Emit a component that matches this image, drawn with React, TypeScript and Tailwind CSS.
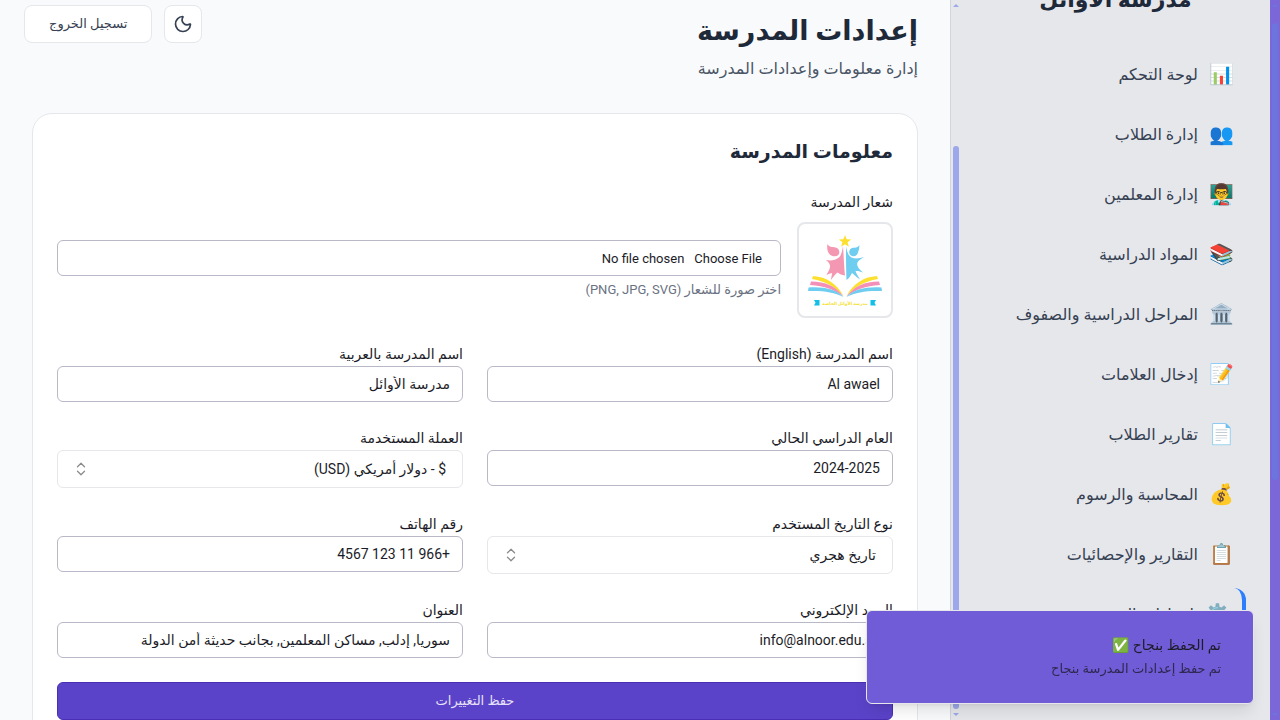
import { useId, type ReactNode } from "react";

const navItems = [
  { icon: "📊", label: "لوحة التحكم" },
  { icon: "👥", label: "إدارة الطلاب" },
  { icon: "👨‍🏫", label: "إدارة المعلمين" },
  { icon: "📚", label: "المواد الدراسية" },
  { icon: "🏛️", label: "المراحل الدراسية والصفوف" },
  { icon: "📝", label: "إدخال العلامات" },
  { icon: "📄", label: "تقارير الطلاب" },
  { icon: "💰", label: "المحاسبة والرسوم" },
  { icon: "📋", label: "التقارير والإحصائيات" },
  { icon: "⚙️", label: "إعدادات المدرسة", active: true },
];

function MoonIcon() {
  return (
    <svg viewBox="0 0 24 24" className="size-5" fill="none" stroke="currentColor" strokeWidth="2" strokeLinecap="round" strokeLinejoin="round" aria-hidden="true">
      <path d="M20.985 12.486a9 9 0 1 1-9.473-9.472c.405-.022.617.46.402.803a6 6 0 0 0 8.268 8.268c.344-.215.825-.004.803.401" />
    </svg>
  );
}

function SortIcon() {
  return (
    <svg viewBox="0 0 16 16" className="size-4" fill="none" stroke="currentColor" strokeWidth="1.3" strokeLinecap="round" strokeLinejoin="round" aria-hidden="true">
      <path d="M4.500 5.800 8 2.300l3.500 3.500M4.500 10.200 8 13.700l3.500-3.500" />
    </svg>
  );
}

function SchoolLogo() {
  return (
    <svg viewBox="0 0 92 92" className="size-full" role="img" aria-label="شعار المدرسة">
      <path fill="#fde02f" d="M46 11l1.600 4.200 4.600.2-3.600 2.900 1.300 4.500L46 20.300l-3.900 2.500 1.300-4.500-3.600-2.900 4.600-.2z" />
      <path fill="#f497b2" d="M28.500 20c2.500 4.500 6 2 9.500 4 3.500 2.200 3 7.800-1.500 8.300-5.500.5-9.500-4.500-8-12.300z" />
      <path fill="#f497b2" d="M44 22c.8 10 1 21 2 29.500-3-.5-5.500-1.500-7.500-3-2 1.500-4 4-6.500 7.500.3-3 .8-5 1.200-7-2 .3-3.700 1-5.700 2 1.500-3 4-6.500 3.500-9.500-.5-2.500-2-4-4-5.500 4.500.8 9.500.5 13-2.500 2.500-2.500 3.300-7 4-11.500z" />
      <circle cx="54.500" cy="28" r="4.300" fill="#6fcdf0" />
      <path fill="#6fcdf0" d="M55 23.700c2.500.3 4-.7 5.300-2.700.2 4.500-1 8.500-4.300 10.500z" />
      <path fill="#6fcdf0" d="M47 22c.8 5 2 9.500 5.500 11.500 3.500 1.500 8 1 12.500-.5-3 2-6.300 3.500-6.800 6.500-.4 3.500 2.800 6.500 5.800 9-2.800-1.200-5-1.800-7.500-1.500 1 3 2.800 5.500 4.500 8.500-3.500-2.500-6-5-8-6.500-1.300 2.500-2.500 5-5.500 7-.5-11-.500-23-.5-34z" />
      <g>
        <path fill="#fde02f" d="M14 52c14 1 24 8 30.500 20C36 63 27 57.500 13 55z" />
        <path fill="#f48fb8" d="M12 57.500c14.500 0 25 5 32.500 15C35 65.500 26 62 11 61z" />
        <path fill="#6fcdf0" d="M9.500 63.500c15-1 27 1.500 35 9.500-10-5-20-6.500-35.500-6z" />
        <path fill="#fde02f" d="M78 52c-14 1-24 8-30.500 20C56 63 65 57.500 79 55z" />
        <path fill="#f48fb8" d="M80 57.500c-14.500 0-25 5-32.500 15C57 65.500 66 62 81 61z" />
        <path fill="#6fcdf0" d="M82.500 63.500c-15-1-27 1.500-35 9.500 10-5 20-6.500 35.500-6z" />
      </g>
      <path fill="#12bfe6" d="M15 76h5.500v5.500H15l1.500-2.700zM77 76h-5.500v5.500H77l-1.500-2.700z" />
      <text x="46" y="80.500" textAnchor="middle" fontSize="4.300" fontWeight="700" fill="#f6df2c" direction="rtl">
        مدرسة الأوائل الخاصة
      </text>
    </svg>
  );
}

function ScrollTrack({ tone, children }: { tone: string; children: ReactNode }) {
  return (
    <div className={`flex shrink-0 flex-col items-center py-1 ${tone}`} aria-hidden="true">
      <svg viewBox="0 0 6 3" className="h-[3px] w-1.5 shrink-0" fill="currentColor">
        <path d="M0 3 3 0l3 3z" />
      </svg>
      {children}
      <svg viewBox="0 0 6 3" className="h-[3px] w-1.5 shrink-0" fill="currentColor">
        <path d="M0 0h6L3 3z" />
      </svg>
    </div>
  );
}

function TextField({ label, value, type = "text" }: { label: string; value: string; type?: string }) {
  const id = useId();
  return (
    <div>
      <label htmlFor={id} className="block text-sm leading-6">{label}</label>
      <input
        id={id}
        type={type}
        dir="rtl"
        defaultValue={value}
        className="block h-9 w-full rounded-md border border-[#b9b8c6] bg-white px-3 text-sm"
      />
    </div>
  );
}

function SelectField({ label, value }: { label: string; value: string }) {
  const id = useId();
  return (
    <div>
      <label htmlFor={id} className="block text-sm leading-6">{label}</label>
      <div className="grid items-center">
        <select
          id={id}
          className="col-start-1 row-start-1 h-[38px] w-full appearance-none rounded-md border border-gray-200 bg-white px-4 text-sm"
        >
          <option>{value}</option>
        </select>
        <span className="pointer-events-none col-start-1 row-start-1 me-4 justify-self-end text-[#8b8b8f]">
          <SortIcon />
        </span>
      </div>
    </div>
  );
}

export default function App() {
  const fileId = useId();
  return (
    <div
      dir="rtl"
      className="flex h-screen overflow-hidden bg-[#f9fafc] font-[Roboto,'DejaVu_Sans',sans-serif] text-[#1c1c28]"
    >
      <ScrollTrack tone="w-2.5 bg-[#7c67d8] text-[#6c74de]">
        <div className="mt-4 h-[457px] w-1.5 rounded-full bg-[#6c74de]" />
        <div className="flex-1" />
      </ScrollTrack>

      <aside className="flex w-80 shrink-0 border-e border-gray-300 bg-gray-200">
        <div className="min-w-0 flex-1 px-6">
          <h2 className="-mt-4 mb-8 text-center text-[22px] leading-8 font-bold text-gray-800">مدرسة الأوائل</h2>
          <nav className="flex flex-col gap-2">
            {navItems.map((item) => (
              <a
                key={item.label}
                href="#"
                className={`flex h-13 items-center gap-3 rounded-xl px-3 text-base text-gray-700 ${item.active ? "border-s-4 border-blue-500" : ""}`}
              >
                <span className="w-6 text-center text-xl">{item.icon}</span>
                <span className="pt-0.5 whitespace-nowrap">{item.label}</span>
              </a>
            ))}
          </nav>
        </div>
        <ScrollTrack tone="w-2.5 text-[#9ca8ea]">
          <div className="min-h-0 flex-1" />
          <div className="h-[563px] w-1.5 rounded-full bg-[#9ca8ea]" />
          <div className="h-1" />
        </ScrollTrack>
      </aside>

      <main className="min-w-0 flex-1 overflow-hidden">
        <header className="flex items-start justify-between pt-[5px] ps-8 pe-6">
          <div className="pt-2">
            <h1 className="text-[27px] leading-9 font-bold text-gray-800">إعدادات المدرسة</h1>
            <p className="mt-2 text-base text-gray-600">إدارة معلومات وإعدادات المدرسة</p>
          </div>
          <div className="flex gap-3">
            <button type="button" aria-label="الوضع الليلي" className="grid size-[38px] place-items-center rounded-lg border border-gray-200 bg-white text-gray-700">
              <MoonIcon />
            </button>
            <button type="button" className="h-[38px] rounded-lg border border-gray-200 bg-white px-6 text-[13px] text-gray-700">
              تسجيل الخروج
            </button>
          </div>
        </header>

        <section className="mx-8 mt-8 rounded-[20px] border border-gray-200 bg-white p-6">
          <h2 className="text-[19px] leading-7 font-bold text-gray-800">معلومات المدرسة</h2>
          <form className="mt-6 flex flex-col gap-6">
            <div>
              <label htmlFor={fileId} className="block text-sm leading-6">شعار المدرسة</label>
              <div className="mt-2 flex items-center gap-4">
                <div className="size-24 shrink-0 rounded-lg border-2 border-gray-200 bg-white">
                  <SchoolLogo />
                </div>
                <div className="min-w-0 flex-1">
                  <input
                    id={fileId}
                    type="file"
                    accept="image/*"
                    className="block h-9 w-full rounded-md border border-[#b9b8c6] bg-white px-3 py-2 text-[13px] leading-5 file:px-1.5"
                  />
                  <p className="mt-1 text-[13px] leading-5 text-gray-500">اختر صورة للشعار (PNG, JPG, SVG)</p>
                </div>
              </div>
            </div>
            <div className="grid grid-cols-2 gap-6">
              <TextField label="اسم المدرسة (English)" value="Al awael" />
              <TextField label="اسم المدرسة بالعربية" value="مدرسة الأوائل" />
              <TextField label="العام الدراسي الحالي" value="2024-2025" />
              <SelectField label="العملة المستخدمة" value="$ - دولار أمريكي (USD)" />
              <SelectField label="نوع التاريخ المستخدم" value="تاريخ هجري" />
              <TextField label="رقم الهاتف" value="+966 11 123 4567" />
              <TextField label="البريد الإلكتروني" value="info@alnoor.edu.sa" />
              <TextField label="العنوان" value="سوريا, إدلب, مساكن المعلمين, بجانب حديثة أمن الدولة" />
            </div>
            <button type="submit" className="h-[38px] rounded-md border border-[#4a2fb5] bg-[#5b43c9] text-[13px] text-[#e6e2f8]">
              حفظ التغييرات
            </button>
          </form>
        </section>
      </main>

      <div
        role="status"
        className="fixed right-6.5 bottom-4 w-[388px] rounded-md border border-gray-200 bg-[#705cd6] px-8 py-[22px] text-sm leading-6 shadow-lg"
      >
        <p className="font-medium text-[#1c1c28]">تم الحفظ بنجاح ✅</p>
        <p className="text-[13px] text-[#2f2850]">تم حفظ إعدادات المدرسة بنجاح</p>
      </div>
    </div>
  );
}
